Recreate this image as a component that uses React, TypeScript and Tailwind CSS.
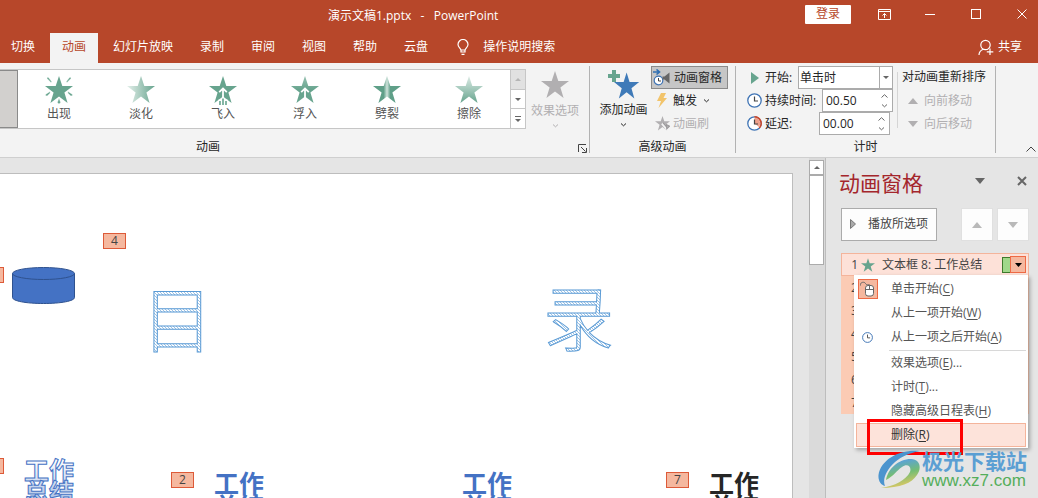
import { useState } from 'react'
import type { ReactNode } from 'react'
import { clsx } from 'clsx'

const TABS = ['切换', '动画', '幻灯片放映', '录制', '审阅', '视图', '帮助', '云盘']

const STAR = '14,0 17.3,10 28,10 19.4,16.4 22.6,27 14,20.6 5.4,27 8.6,16.4 0,10 10.7,10'

const EFFECTS = [
  { id: 'appear', label: '出现' },
  { id: 'fade', label: '淡化' },
  { id: 'fly', label: '飞入' },
  { id: 'float', label: '浮入' },
  { id: 'split', label: '劈裂' },
  { id: 'wipe', label: '擦除' },
]

const MENU = [
  { label: '单击开始', hotkey: 'C', icon: 'mouse' },
  { label: '从上一项开始', hotkey: 'W' },
  { label: '从上一项之后开始', hotkey: 'A', icon: 'clock' },
  { label: '效果选项', hotkey: 'E', more: true, divider: true },
  { label: '计时', hotkey: 'T', more: true },
  { label: '隐藏高级日程表', hotkey: 'H' },
  { label: '删除', hotkey: 'R', active: true },
]

function Triangle({ up = false, small = false, className }: { up?: boolean; small?: boolean; className?: string }) {
  return (
    <svg width={small ? 6 : 10} height={small ? 3 : 6} viewBox="0 0 10 6" preserveAspectRatio="none" className={className} fill="currentColor">
      <path d={up ? 'M0 6L5 0L10 6Z' : 'M0 0L5 6L10 0Z'} />
    </svg>
  )
}

function Chevron({ up = false, className }: { up?: boolean; className?: string }) {
  return (
    <svg width="7" height="4" viewBox="0 0 7 4" fill="none" stroke="currentColor" className={className}>
      <path d={up ? 'M.5 3.5L3.5 .7L6.5 3.5' : 'M1 .5L3.5 2.8L6 .5'} />
    </svg>
  )
}

function EffectIcon({ id }: { id: string }) {
  const fill =
    id === 'fade' ? 'url(#fade)' : id === 'float' ? 'url(#float)' : id === 'split' ? 'url(#split)' : id === 'wipe' ? 'url(#wipe)' : '#67a48e'
  return (
    <svg width="28" height="29" viewBox="0 0 28 29">
      <defs>
        <linearGradient id="fade">
          <stop offset="0" stopColor="#e3efea" />
          <stop offset="1" stopColor="#67a48e" />
        </linearGradient>
        <linearGradient id="float" x2="0" y2="1">
          <stop offset="0.1" stopColor="#8dbbaa" />
          <stop offset="0.5" stopColor="#67a48e" />
        </linearGradient>
        <linearGradient id="split">
          <stop offset="0.38" stopColor="#5f9f88" />
          <stop offset="0.5" stopColor="#cfe3db" />
          <stop offset="0.62" stopColor="#5f9f88" />
        </linearGradient>
        <linearGradient id="wipe" x2="0" y2="1">
          <stop offset="0" stopColor="#dcebe5" />
          <stop offset="1" stopColor="#67a48e" />
        </linearGradient>
      </defs>
      <polygon points={STAR} fill={fill} />
      {id === 'appear' && (
        <path
          d="M2 2.500Q2 .8 3.500 1.500L6.800 5.800L6 6.500ZM26 2.500Q26 .8 24.500 1.500L21.200 5.800L22 6.500ZM.5 18.500L5 15.500L5.200 17L2.200 20Q.5 20.300 .5 18.500ZM27.500 18.500L23 15.500L22.800 17L25.800 20Q27.500 20.300 27.500 18.500ZM14 22L15.600 26.500Q14 29.200 12.400 26.500Z"
          fill="#67a48e"
          stroke="#fff"
          strokeWidth=".4"
        />
      )}
      {id === 'fly' && (
        <g fill="none">
          <path d="M9.500 23.500h9v5.500h-9z" fill="#fff" />
          <path d="M14 12.500v9.500M10.200 16.200l3.800-3.800 3.800 3.800" stroke="#fff" strokeWidth="1.800" />
          <path d="M11 25V29M14 22.500V29M17 25V29" stroke="#67a48e" strokeWidth="1.600" />
        </g>
      )}
      {id === 'float' && (
        <path d="M14 12.500v12M10.200 16.200l3.800-3.800 3.800 3.800" fill="none" stroke="#fff" strokeWidth="1.800" />
      )}
    </svg>
  )
}

function Clock({ size = 15, late = false }: { size?: number; late?: boolean }) {
  return (
    <svg width={size} height={size} viewBox="0 0 15 15" fill="none" className="shrink-0">
      <circle cx="7.5" cy="7.5" r="6.7" fill="#fff" stroke="#3f74b5" strokeWidth="1.3" />
      {late && (
        <>
          <path d="M7.5 7.5V1.5a6 6 0 0 1 4.5 9.5z" fill="#f0a08a" />
          <path d="M7.5 .8a6.7 6.7 0 0 1 4.8 11.3" stroke="#d24726" strokeWidth="1.5" />
        </>
      )}
      <path d="M7.5 3.5V8H11" stroke="#444" strokeWidth="1.2" />
    </svg>
  )
}

function TitleBar() {
  return (
    <div className="flex h-8 items-center justify-between pl-[328px]">
      <h1 className="whitespace-pre text-xs">演示文稿1.pptx   -   PowerPoint</h1>
      <div className="flex items-center">
        <button className="mr-[17px] mb-1 h-[19px] w-[46px] rounded-[1px] bg-white text-xs leading-none text-[#b7472a]">登录</button>
        <div className="mb-1 flex gap-3.5">
          <button aria-label="功能区显示选项" className="flex h-7 w-8 items-center justify-center">
            <svg width="13" height="11" viewBox="0 0 13 11" fill="none" stroke="currentColor">
              <path d="M.5 .5h12v10H.5zM.5 2.5h12M6.5 9V4.5M4.5 6.5l2-2 2 2" />
            </svg>
          </button>
          <button aria-label="最小化" className="flex h-7 w-8 items-center justify-center">
            <span className="h-px w-2.5 bg-white" />
          </button>
          <button aria-label="最大化" className="flex h-7 w-8 items-center justify-center">
            <span className="size-2.5 border border-white" />
          </button>
          <button aria-label="关闭" className="flex h-7 w-8 items-center justify-center">
            <svg width="10" height="10" viewBox="0 0 10 10" stroke="currentColor">
              <path d="M.5 .5l9 9M9.5 .5l-9 9" />
            </svg>
          </button>
        </div>
      </div>
    </div>
  )
}

function TabRow() {
  const [active, setActive] = useState('动画')
  return (
    <div className="flex h-[31px] items-end justify-between pr-4">
      <nav className="-ml-px flex h-[30px] gap-[3px]">
        {TABS.map((tab) => (
          <button
            key={tab}
            onClick={() => setActive(tab)}
            className={clsx('whitespace-nowrap px-3 pb-0.5', tab === active ? 'bg-[#f3f3f3] text-[#b7472a]' : 'text-white')}
          >
            {tab}
          </button>
        ))}
        <button className="flex items-center gap-3.5 whitespace-nowrap pr-3 pl-3.5 pb-0.5">
          <svg width="12" height="16" viewBox="0 0 12 16" fill="none" stroke="currentColor" strokeWidth="1.2">
            <path d="M4 11.5C4 9 1 8.500 1 5.500a5 5 0 0 1 10 0C11 8.500 8 9 8 11.500V13H4zM4 11h4M4.500 15.300h3" />
          </svg>
          操作说明搜索
        </button>
      </nav>
      <button className="flex h-[30px] items-center gap-1 pb-0.5">
        <svg width="16" height="17" viewBox="0 0 16 17" fill="none" stroke="currentColor" strokeWidth="1.2">
          <circle cx="7.500" cy="6" r="4.700" />
          <path d="M1 16c0-3 2-5 4.500-5.800M12 9.500v6.500M8.800 12.800h6.500" />
        </svg>
        共享
      </button>
    </div>
  )
}

function Group({ label, labelClass, className, children }: { label: string; labelClass?: string; className?: string; children: ReactNode }) {
  return (
    <section className={clsx('relative flex shrink-0 flex-col justify-between border-r border-[#b2b2b2]', className)}>
      {children}
      <h2 className={clsx('h-4 text-xs leading-5', labelClass ?? 'text-center')}>{label}</h2>
    </section>
  )
}

function AnimationGroup() {
  return (
    <Group label="动画" labelClass="pl-[196px]" className="w-[590px]">
      <div className="flex gap-1">
        <div className="mt-[3px] flex h-[60px] border-y border-[#c6c6c6] bg-white">
          <button aria-label="无" className="w-[18px] border border-l-0 border-[#8a8a8a] bg-[#d2d0ce]" />
          {EFFECTS.map((e) => (
            <button key={e.id} className="flex w-[82px] flex-col items-center pt-1.5 text-[#555]">
              <EffectIcon id={e.id} />
              <span className="leading-[18px]">{e.label}</span>
            </button>
          ))}
          <div className="flex w-4 flex-col divide-y divide-[#c6c6c6] border-x border-[#c6c6c6] text-[#666]">
            <button aria-label="上一行" className="flex flex-1 items-center justify-center bg-[#e1e1e1] text-[#b5b5b5]"><Triangle up small /></button>
            <button aria-label="下一行" className="flex flex-1 items-center justify-center"><Triangle small /></button>
            <button aria-label="其他" className="flex flex-1 flex-col items-center justify-center gap-0.5">
              <span className="h-px w-1.5 bg-current" />
              <Triangle small />
            </button>
          </div>
        </div>
        <button disabled className="flex w-[50px] flex-col items-center pt-[5px] text-[#b1afb1]">
          <svg width="28" height="27" viewBox="0 0 28 27" fill="#b1afb1"><polygon points={STAR} /></svg>
          <span className="mt-1 whitespace-nowrap leading-[18px]">效果选项</span>
          <Chevron className="mt-1" />
        </button>
      </div>
      <button aria-label="动画设置" className="absolute right-0.5 bottom-0 text-[#444]">
        <svg width="9" height="9" viewBox="0 0 9 9" fill="none" stroke="currentColor">
          <path d="M.5 8V.5H8M3 3l4.500 4.500M8.500 4v4.500H4" />
        </svg>
      </button>
    </Group>
  )
}

function AdvancedGroup() {
  return (
    <Group label="高级动画" className="w-[146px] text-[#262626]">
      <div className="flex">
        <button className="flex w-[61px] flex-col items-center pt-1 pl-1.5">
          <svg width="32" height="29" viewBox="0 0 32 29">
            <polygon points={STAR} transform="translate(6 2.500) scale(.9 .96)" fill="#3f7ab8" />
            <path d="M4 0h4v4h4v4H8v4H4V8H0V4h4z" fill="#67a48e" />
          </svg>
          <span className="mt-0.5 whitespace-nowrap leading-[18px]">添加动画</span>
          <Chevron className="mt-1" />
        </button>
        <div className="flex flex-col">
          <button className="flex h-[23px] w-[77px] items-center gap-1 border border-[#8a8a8a] bg-[#c6c6c6] pl-px">
            <svg width="17" height="17" viewBox="0 0 17 17" fill="none" className="shrink-0">
              <circle cx="5.500" cy="11.500" r="4.300" fill="#fff" stroke="#3f74b5" strokeWidth="1.200" />
              <path d="M5.500 9v3H8" stroke="#444" />
              <path d="M0 3h5.500M3.500 .5L6.500 3L3.500 5.500" stroke="#2f6fb3" strokeWidth="1.600" />
              <path d="M9.500 7.500h2L16.500 3.500v11L11.500 10.500H9.500z" fill="#666" />
            </svg>
            <span className="whitespace-nowrap">动画窗格</span>
          </button>
          <button className="flex h-[23px] items-center pl-1.5">
            <svg width="10" height="15" viewBox="0 0 10 15" fill="#f2c46b">
              <path d="M4 0h5L6.500 5H10L1.500 15L4 8H0z" />
            </svg>
            <span className="mx-1.5">触发</span>
            <Chevron />
          </button>
          <button disabled className="flex h-[23px] items-center gap-[3px] pl-1 text-[#b1afb1]">
            <svg width="15" height="15" viewBox="0 0 28 28" fill="#b1afb1">
              <polygon points={STAR} />
              <path d="M13 14l10 12" stroke="#f3f3f3" strokeWidth="4" />
              <path d="M15 13l7 8M21 16l6 3-5 5z" stroke="#9c9a9c" strokeWidth="2" />
            </svg>
            动画刷
          </button>
        </div>
      </div>
    </Group>
  )
}

function Spinner({ id, value, className }: { id: string; value: string; className?: string }) {
  return (
    <div className={clsx('flex h-[23px] w-[71px] items-center border border-[#ababab] bg-white', className)}>
      <input id={id} defaultValue={value} className="h-[19px] w-full min-w-0 pl-[3px] text-xs outline-none" />
      <div className="flex flex-col gap-1.5 px-1 text-[#666]">
        <button aria-label="增加" className="block"><Chevron up className="block" /></button>
        <button aria-label="减少" className="block"><Chevron className="block" /></button>
      </div>
    </div>
  )
}

function TimingGroup() {
  return (
    <Group label="计时" className="w-[260px] text-[#262626]">
      <div className="flex">
        <div className="w-[157px] pl-[11px]">
          <div className="flex h-[23px] items-center">
            <svg width="16" height="12" viewBox="0 0 16 12" fill="#67a48e"><path d="M4 0L12 6L4 12Z" /></svg>
            <label htmlFor="start" className="ml-0.5 flex-1">开始:</label>
            <div className="relative h-[23px] w-[95px]">
              <select id="start" className="size-full appearance-none border border-[#ababab] bg-white pl-px outline-none">
                <option>单击时</option>
              </select>
              <span className="pointer-events-none absolute inset-y-0 right-0 flex w-3.5 items-center justify-center border border-[#ababab] text-[#666]">
                <Triangle small />
              </span>
            </div>
          </div>
          <div className="flex h-[23px] items-center">
            <Clock />
            <label htmlFor="duration" className="ml-[3px] flex-1 whitespace-nowrap">持续时间:</label>
            <Spinner id="duration" value="00.50" />
          </div>
          <div className="flex h-[23px] items-center">
            <Clock late />
            <label htmlFor="delay" className="ml-[3px] flex-1">延迟:</label>
            <Spinner id="delay" value="00.00" className="mr-[3px]" />
          </div>
        </div>
        <div className="mt-1.5 ml-1 h-14 w-px bg-[#d5d5d5]" />
        <div className="pl-1">
          <p className="h-[23px] whitespace-nowrap leading-[22px]">对动画重新排序</p>
          <button disabled className="flex h-[23px] items-center gap-1.5 pl-1.5 text-[#b1afb1]"><Triangle up />向前移动</button>
          <button disabled className="flex h-[23px] items-center gap-1.5 pl-1.5 text-[#b1afb1]"><Triangle />向后移动</button>
        </div>
      </div>
    </Group>
  )
}

function Badge({ children, className }: { children?: ReactNode; className: string }) {
  return (
    <span className={clsx('absolute h-4 w-[23px] border border-[#dd5a38] bg-[#f5b89f] text-center text-xs leading-[13px] text-[#444]', className)}>
      {children}
    </span>
  )
}

function WordArt({ x, y, leading = 23 }: { x: number; y: number; leading?: number }) {
  return (
    <text x={x} y={y}>
      工作<tspan x={x} dy={leading}>总结</tspan>
    </text>
  )
}

function Slide() {
  return (
    <div className="relative h-full overflow-hidden border-t border-r border-[#bdbdbd] bg-white">
      <svg className="absolute top-[93px] left-[12px]" width="63" height="37" viewBox="0 0 63 37" fill="#4472c4" stroke="#2f528f">
        <path d="M.5 6.500V30.500C.5 34 14 36.500 31.500 36.500S62.500 34 62.500 30.500V6.500" />
        <ellipse cx="31.500" cy="6.500" rx="31" ry="6" />
      </svg>
      <svg className="absolute inset-0 size-full">
        <defs>
          <pattern id="hatch" width="3" height="3" patternUnits="userSpaceOnUse">
            <rect width="3" height="3" fill="#fff" />
            <path d="M-1 -1L4 4M-1 2L1 4M2 -1L4 1" stroke="#5b9bd5" strokeWidth=".6" />
          </pattern>
          <linearGradient id="shade" x2="0" y2="1">
            <stop offset="0.1" stopColor="#fff" />
            <stop offset="1" stopColor="#9db5de" />
          </linearGradient>
        </defs>
        <g fontSize="71" fontWeight="300" fill="url(#hatch)" stroke="#5b9bd5">
          <text x="142" y="172">目</text>
          <text x="543" y="171">录</text>
        </g>
        <g fontSize="25" fontWeight="700">
          <g fill="url(#shade)" stroke="#4472c4">
            <WordArt x={24} y={306} leading={22} />
          </g>
          <g fill="#4472c4">
            <WordArt x={214} y={319} />
            <WordArt x={462} y={319} />
          </g>
          <g fill="#262626">
            <WordArt x={709} y={319} />
          </g>
        </g>
      </svg>
      <Badge className="top-[59px] left-[103px]">4</Badge>
      <Badge className="top-[93px] left-[-19px]" />
      <Badge className="top-[284px] left-[-19px]" />
      <Badge className="top-[298px] left-[171px]">2</Badge>
      <Badge className="top-[298px] left-[666px]">7</Badge>
    </div>
  )
}

function ContextMenu() {
  return (
    <div role="menu" className="absolute top-full right-0 left-3 z-10 border-2 border-b border-white bg-white text-[#555] shadow-[2px_2px_4px_rgba(0,0,0,0.3)]">
      {MENU.map((item) => (
        <div key={item.hotkey} className={clsx(item.divider && 'mt-px ml-[33px] border-t border-[#d8d8d8]')}>
          <button
            role="menuitem"
            className={clsx(
              'flex h-6 w-full items-center border text-left',
              item.divider && '-ml-[33px]',
              item.active ? 'border-[#f4b49b] bg-[#fde3da] text-[#333]' : 'border-transparent'
            )}
          >
            <span className="flex w-[34px] shrink-0 pl-px">
              {item.icon === 'mouse' && (
                <span className="flex size-5 items-center justify-center border border-[#ee6a45] bg-[#f5b89f]">
                  <svg width="16" height="16" viewBox="0 0 16 16" fill="none" stroke="#666">
                    <path d="M.5 4.500V3.500C.5 1 4.500 .5 5.500 2.500S8.500 3.500 9.500 3.500" />
                    <rect x="5.500" y="4.500" width="8" height="10.500" rx="2.500" fill="#fff" />
                    <path d="M5.500 8.500h8M9.500 4.500V8.500" />
                  </svg>
                </span>
              )}
              {item.icon === 'clock' && <span className="ml-1"><Clock size={11} /></span>}
            </span>
            <span className="whitespace-nowrap">
              {item.label}(<u className="underline-offset-2">{item.hotkey}</u>){item.more && '...'}
            </span>
          </button>
        </div>
      ))}
      {/* Callout around the delete command */}
      <div className="pointer-events-none absolute -bottom-2 left-[11px] h-9 w-24 border-3 border-[#fe0000]" />
    </div>
  )
}

function Watermark() {
  return (
    <div className="absolute top-[291px] right-[11px] z-20 flex items-center gap-px">
      <svg width="43" height="39" viewBox="0 0 43 39">
        <defs>
          <linearGradient id="leaf" x1="0" y1="0" x2=".3" y2="1">
            <stop offset="0.2" stopColor="#5ba3d6" />
            <stop offset="0.6" stopColor="#74bd74" />
            <stop offset="1" stopColor="#d6c765" />
          </linearGradient>
        </defs>
        <path d="M42 1C22 -1 3 9 .5 25C0 31 3 35 7 36C4 29 9 19 17 12C24 6 32 3 42 1Z" fill="#4b94ce" />
        <path d="M8 30C10 19 20 9 33 9C42 9 44 18 39 25C34 33 22 38 3 38C17 36 28 30 32 22C34 16 29 13 24 17C18 21 16 26 8 30Z" fill="url(#leaf)" />
      </svg>
      <div className="whitespace-nowrap">
        <p className="text-[21px] leading-6 font-bold text-[#5b9fd3]">极光下载站</p>
        <p className="font-['Liberation_Sans'] text-[17px] leading-4 font-normal text-[#55ae5b]">www.xz7.com</p>
      </div>
    </div>
  )
}

function AnimationPane() {
  return (
    <aside className="relative w-[213px] shrink-0 border-l border-[#bdbdbd] pr-[9px] pl-[15px] text-[#444]">
      <div className="-ml-0.5 flex h-[50px] items-center justify-between">
        <h2 className="text-[21px] text-[#a4262c]">动画窗格</h2>
        <div className="flex items-center gap-8 pr-0.5 pb-1 text-[#666]">
          <button aria-label="窗格选项"><Triangle /></button>
          <button aria-label="关闭窗格">
            <svg width="10" height="10" viewBox="0 0 10 10" stroke="currentColor" strokeWidth="2">
              <path d="M1 1l8 8M9 1l-8 8" />
            </svg>
          </button>
        </div>
      </div>
      <div className="flex h-[33px] gap-1">
        <button className="flex w-24 items-center border border-[#ababab] bg-[#fdfdfd] pl-2 pb-0.5">
          <svg width="6" height="12" viewBox="0 0 6 12" fill="#aaa" stroke="#777"><path d="M.5 1.500V10.500L5.500 6Z" /></svg>
          <span className="ml-3 whitespace-nowrap">播放所选项</span>
        </button>
        <button disabled aria-label="上移" className="ml-auto flex w-8 items-center justify-center border border-[#e0e0e0] bg-[#fdfdfd] text-[#b9b9b9]"><Triangle up /></button>
        <button disabled aria-label="下移" className="flex w-8 items-center justify-center border border-[#e0e0e0] bg-[#fdfdfd] text-[#b9b9b9]"><Triangle /></button>
      </div>
      <ol className="mt-3 bg-[#fbcbb4]">
        <li className="relative flex h-[23px] items-center border border-[#f4b49b] bg-[#fde1d8]">
          <span className="w-4 pl-2 text-right">1</span>
          <svg width="14" height="14" viewBox="0 0 28 27" fill="#67a48e" className="ml-[3px]"><polygon points={STAR} /></svg>
          <span className="ml-[7px] whitespace-nowrap">文本框 8: 工作总结</span>
          <span className="ml-auto h-4 w-2 border border-r-0 border-[#3f7a2c] bg-[#a0d88a]" />
          <button aria-label="动画选项" className="mr-0.5 flex h-[17px] w-4 items-center justify-center border border-[#ee6a45] bg-[#f5b89f] text-black">
            <svg width="7" height="4" viewBox="0 0 7 4"><path d="M0 0h7L3.500 4z" /></svg>
          </button>
          <ContextMenu />
        </li>
        {[2, 3, 4, 5, 6, 7].map((n) => (
          <li key={n} className="h-[23px] pl-2.5 leading-[23px]">{n}</li>
        ))}
      </ol>
      <Watermark />
    </aside>
  )
}

export default function App() {
  return (
    <div className="flex h-screen flex-col overflow-hidden bg-[#e5e5e5] font-['Open_Sans','Noto_Sans_CJK_SC',sans-serif] text-xs">
      <header className="bg-[#b7472a] text-white">
        <TitleBar />
        <TabRow />
      </header>
      <div className="flex border-b border-[#cfcfcf] bg-[#f3f3f3] pt-[3px] pb-1 text-[#262626]">
        <div className="flex h-[87px] flex-1">
          <AnimationGroup />
          <AdvancedGroup />
          <TimingGroup />
          <button aria-label="折叠功能区" className="ml-auto flex items-end pr-0.5 text-[#444]">
            <svg width="10" height="7" viewBox="0 0 10 7" fill="none" stroke="currentColor"><path d="M.5 5.500L5 1L9.500 5.500" /></svg>
          </button>
        </div>
      </div>
      <div className="flex min-h-0 flex-1">
        <main className="min-w-0 flex-1 pt-[15px] pr-4">
          <Slide />
        </main>
        <div className="flex w-4 shrink-0 flex-col bg-[#dadada] pt-0.5">
          <button aria-label="向上滚动" className="flex h-[15px] w-[15px] items-center justify-center border border-[#ababab] bg-white text-[#666]">
            <Triangle up small />
          </button>
          <div className="h-[90px] w-[15px] border border-[#ababab] bg-white" />
        </div>
        <AnimationPane />
      </div>
    </div>
  )
}
